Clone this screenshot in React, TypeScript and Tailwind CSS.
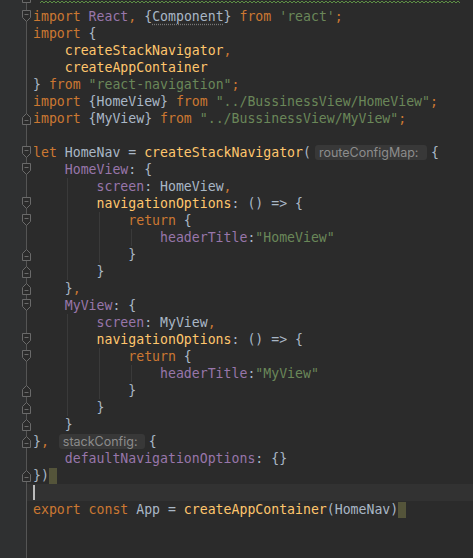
import React from "react";

const K = "text-[#CC7832]";
const T = "text-[#A9B7C6]";
const S = "text-[#6A8759]";
const P = "text-[#9876AA]";
const F = "text-[#FFC66D]";

type Tok = [string, string];

function FoldStart() {
  return (
    <svg width="9" height="12" viewBox="0 0 9 12" className="absolute left-[-5px] top-[2px]">
      <path d="M0.5 0.5 H8.5 V7.5 L4.5 11.5 L0.5 7.5 Z" fill="#2b2b2b" stroke="#6a6a6a" strokeWidth="1" />
      <path d="M2.5 4.5 H6.5" stroke="#6a6a6a" strokeWidth="1" />
    </svg>
  );
}

function FoldEnd() {
  return (
    <svg width="9" height="12" viewBox="0 0 9 12" className="absolute left-[-5px] top-[3px]">
      <path d="M0.5 11.5 H8.5 V4.5 L4.5 0.5 L0.5 4.5 Z" fill="#2b2b2b" stroke="#6a6a6a" strokeWidth="1" />
      <path d="M2.5 7.5 H6.5" stroke="#6a6a6a" strokeWidth="1" />
    </svg>
  );
}

function Hint({ text, w, ml }: { text: string; w: string; ml: string }) {
  return (
    <span
      className={`inline-flex items-center h-[15px] rounded-[3px] bg-[#383838] pl-[4px] text-[#8c8c8c] text-[12.5px] ${w} ${ml}`}
      style={{ fontFamily: "Inter, 'Noto Sans', sans-serif" }}
    >
      {text}
    </span>
  );
}

function Row({
  toks,
  fold,
  current,
  children,
}: {
  toks?: Tok[];
  fold?: "s" | "e";
  current?: boolean;
  children?: React.ReactNode;
}) {
  return (
    <div className={`relative h-[17px] flex items-center pl-[6px] whitespace-pre ${current ? "bg-[#323232]" : ""}`}>
      {fold === "s" && <FoldStart />}
      {fold === "e" && <FoldEnd />}
      {toks && toks.map((t, i) => (
        <span key={i} className={t[1]}>
          {t[0]}
        </span>
      ))}
      {children}
    </div>
  );
}

function Guide({ left, row, n }: { left: number; row: number; n: number }) {
  return (
    <div
      className="absolute w-px bg-[#3a3a3a]"
      style={{ left, top: 8 + row * 17, height: n * 17 }}
    />
  );
}

export default function App() {
  return (
    <div
      className="w-[473px] h-[558px] bg-[#2b2b2b] flex overflow-hidden text-[13.2px] leading-[17px]"
      style={{ fontFamily: "'DejaVu Sans Mono', 'Liberation Mono', monospace" }}
    >
      <div className="w-[26px] shrink-0 bg-[#2f3031]" />
      <div className="relative flex-1 border-l border-[#555555] flex flex-col">
        <Guide left={40} row={10} n={6} />
        <Guide left={72} row={12} n={3} />
        <Guide left={104} row={13} n={1} />
        <Guide left={40} row={18} n={6} />
        <Guide left={72} row={20} n={3} />
        <Guide left={104} row={21} n={1} />

        <div className="relative h-[8px]">
          <svg width="9" height="4" className="absolute left-[-5px] top-0">
            <path d="M0.5 0 V2.5 H8.5 V0" fill="#2b2b2b" stroke="#6a6a6a" strokeWidth="1" />
          </svg>
          <svg className="absolute left-[13px] top-0" width="420" height="4">
            <defs>
              <pattern id="wave" width="4" height="4" patternUnits="userSpaceOnUse">
                <path d="M0 3 L2 1 L4 3" fill="none" stroke="#5d8f45" strokeWidth="1" />
              </pattern>
            </defs>
            <rect width="420" height="4" fill="url(#wave)" />
          </svg>
        </div>

        <Row fold="s">
          <span className={K}>import </span>
          <span className={P}>React</span>
          <span className={K}>, </span>
          <span className={T}>{"{"}</span>
          <span className="text-[#A9B7C6] underline decoration-dotted decoration-[#777777] underline-offset-[3px]">Component</span>
          <span className={T}>{"} "}</span>
          <span className={K}>from </span>
          <span className={S}>'react'</span>
          <span className={K}>;</span>
        </Row>
        <Row toks={[["import ", K], ["{", T]]} />
        <Row toks={[["    createStackNavigator", F], [",", K]]} />
        <Row toks={[["    createAppContainer", F]]} />
        <Row toks={[["} ", T], ["from ", K], ['"react-navigation"', S], [";", K]]} />
        <Row toks={[["import ", K], ["{HomeView} ", T], ["from ", K], ['"../BussinessView/HomeView"', S], [";", K]]} />
        <Row fold="e" toks={[["import ", K], ["{MyView} ", T], ["from ", K], ['"../BussinessView/MyView"', S], [";", K]]} />
        <Row />
        <Row fold="s">
          <span className={K}>let </span>
          <span className={T}>HomeNav = </span>
          <span className={F}>createStackNavigator</span>
          <span className={T}>(</span>
          <Hint text="routeConfigMap:" w="w-[112px]" ml="ml-[4px]" />
          <span className={`${T} ml-[4px]`}>{"{"}</span>
        </Row>
        <Row fold="s" toks={[["    ", T], ["HomeView", P], [": {", T]]} />
        <Row toks={[["        ", T], ["screen", P], [": HomeView", T], [",", K]]} />
        <Row fold="s" toks={[["        ", T], ["navigationOptions", F], [": () => {", T]]} />
        <Row fold="s" toks={[["            ", T], ["return ", K], ["{", T]]} />
        <Row toks={[["                ", T], ["headerTitle", P], [":", T], ['"HomeView"', S]]} />
        <Row fold="e" toks={[["            }", T]]} />
        <Row fold="e" toks={[["        }", T]]} />
        <Row fold="e" toks={[["    }", T], [",", K]]} />
        <Row fold="s" toks={[["    ", T], ["MyView", P], [": {", T]]} />
        <Row toks={[["        ", T], ["screen", P], [": MyView", T], [",", K]]} />
        <Row fold="s" toks={[["        ", T], ["navigationOptions", F], [": () => {", T]]} />
        <Row fold="s" toks={[["            ", T], ["return ", K], ["{", T]]} />
        <Row toks={[["                ", T], ["headerTitle", P], [":", T], ['"MyView"', S]]} />
        <Row fold="e" toks={[["            }", T]]} />
        <Row fold="e" toks={[["        }", T]]} />
        <Row fold="e" toks={[["    }", T]]} />
        <Row fold="e">
          <span className={T}>{"}"}</span>
          <span className={K}>{", "}</span>
          <Hint text="stackConfig:" w="w-[86px]" ml="ml-[2px]" />
          <span className={`${T} ml-[4px]`}>{"{"}</span>
        </Row>
        <Row toks={[["    ", T], ["defaultNavigationOptions", P], [": {}", T]]} />
        <Row fold="e">
          <span className={T}>{"})"}</span>
          <span className="inline-block w-[8px] h-[16px] bg-[#54543a]" />
        </Row>
        <Row current>
          <span className="inline-block w-[2px] h-[15px] bg-[#bbbbbb]" />
        </Row>
        <Row>
          <span className={K}>export const </span>
          <span className={T}>App = </span>
          <span className={F}>createAppContainer</span>
          <span className={T}>(HomeNav)</span>
          <span className="inline-block w-[8px] h-[16px] bg-[#54543a]" />
        </Row>
      </div>
    </div>
  );
}
